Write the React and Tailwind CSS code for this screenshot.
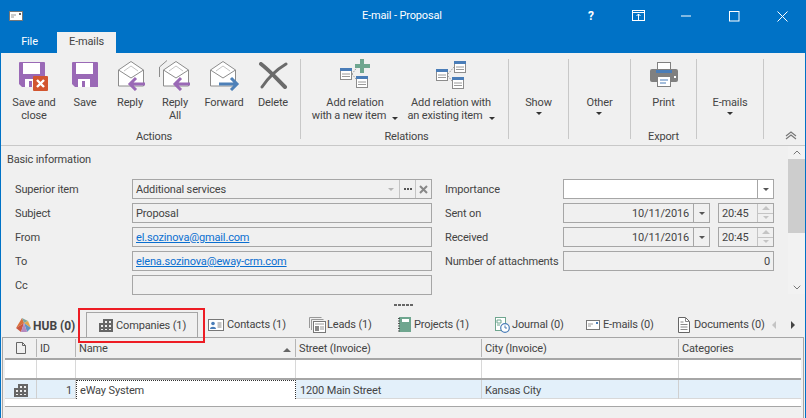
import { ChevronUp, ChevronDown } from 'lucide-react'

const FONT = { fontFamily: 'Roboto, "Noto Sans", sans-serif' }

// --- ribbon icons ---
function Disk() {
  return (
    <g>
      <path d="M1 0h24a1 1 0 0 1 1 1v24H3l-3-3V1a1 1 0 0 1 1-1z" fill="#9a69b6" />
      <rect x="4" y="1" width="17" height="11" fill="#fff" />
      <rect x="6" y="17" width="12" height="8" fill="#fff" />
      <rect x="10" y="19" width="3" height="6" fill="#9a69b6" />
    </g>
  )
}

function SaveCloseIcon() {
  return (
    <svg className="mt-[3px]" width="32" height="29" viewBox="0 0 32 29">
      <g transform="translate(1 0)"><Disk /></g>
      <rect x="15" y="14" width="15" height="15" rx="1" fill="#d2552f" />
      <path d="M19 18l7 7M26 18l-7 7" stroke="#fff" strokeWidth="2.4" />
    </svg>
  )
}

function SaveIcon() {
  return (
    <svg className="mt-[3px]" width="26" height="25" viewBox="0 0 26 25">
      <Disk />
    </svg>
  )
}

function Envelope({ back }) {
  return (
    <g fill="none" stroke="#8c8c8c" strokeWidth="1">
      {back && <path d="M-3.5 17V7L4 .5" />}
      <path d="M.5 10L13 1.5 25.5 10v16H.5z" fill="#fff" />
      <path d="M.5 10L13 18l12.5-8" />
      <path d="M6 11l7-5 7 5" stroke="#c4c4c4" />
    </g>
  )
}

function ReplyIcon({ all }) {
  return (
    <svg width="34" height="32" viewBox="-5 -1 34 32">
      <Envelope back={all} />
      <path d="M27 24H12M18 18l-6 6 6 6" fill="none" stroke="#9a69b6" strokeWidth="3" />
    </svg>
  )
}

function ForwardIcon() {
  return (
    <svg width="34" height="32" viewBox="-3 -1 34 32">
      <Envelope />
      <path d="M9 24h17M21 18l6 6-6 6" fill="none" stroke="#4d80b8" strokeWidth="3" />
    </svg>
  )
}

function DeleteIcon() {
  return (
    <svg className="mt-[3px]" width="30" height="27" viewBox="0 0 30 27">
      <path d="M3 2c8 6 16 15 24 23" fill="none" stroke="#6b6b6b" strokeWidth="4" strokeLinecap="round" />
      <path d="M28 2C18 8 10 16 4 25" fill="none" stroke="#6b6b6b" strokeWidth="3" strokeLinecap="round" />
    </svg>
  )
}

function MiniTable({ x, y }) {
  return (
    <g transform={`translate(${x} ${y})`}>
      <rect x=".5" y=".5" width="11" height="11" fill="#fff" stroke="#8c8c8c" />
      <rect x="0" y="0" width="12" height="3" fill="#4a7db8" />
      <path d="M2 6h8M2 8.500h8" stroke="#9a9a9a" />
    </g>
  )
}

function RelationNewIcon() {
  return (
    <svg width="32" height="32" viewBox="0 0 32 32">
      <MiniTable x="1" y="9" />
      <MiniTable x="17" y="17" />
      <path d="M13 15l6-8M13 15l4 5" stroke="#a0a0a0" strokeDasharray="1.500 1" fill="none" />
      <path d="M21 0h4v5h6v4h-6v5h-4V9h-5V5h5z" fill="#6fa68f" />
    </svg>
  )
}

function RelationExistIcon() {
  return (
    <svg width="32" height="32" viewBox="0 0 32 32">
      <MiniTable x="1" y="10" />
      <MiniTable x="19" y="2" />
      <MiniTable x="17" y="18" />
      <path d="M13 15l6-7M13 17l4 5" stroke="#a0a0a0" strokeDasharray="1.500 1" fill="none" />
    </svg>
  )
}

function PrintIcon() {
  return (
    <svg className="mt-[2px]" width="30" height="28" viewBox="0 0 30 28">
      <rect x="8.500" y="1.500" width="13" height="10" fill="#fff" stroke="#808080" />
      <rect x="1" y="8" width="28" height="13" rx="2" fill="#808080" />
      <rect x="7" y="9" width="16" height="3" fill="#4a7db8" />
      <rect x="8.500" y="15.500" width="13" height="10" fill="#fff" stroke="#808080" />
      <path d="M11 19h8M11 22h6" stroke="#4a7db8" />
      <rect x="25" y="15" width="2" height="2" fill="#fff" />
    </svg>
  )
}

function Caret({ color = 'border-t-[#333]' }) {
  return <span className={`inline-block w-0 h-0 border-x-[3px] border-x-transparent border-t-[3px] ${color}`} />
}

function RibbonButton({ width, icon, lines, caret }) {
  return (
    <div className="flex flex-col items-center h-full" style={{ width }}>
      <div className="h-[33px] flex items-start justify-center">{icon}</div>
      <div className="mt-[4px] text-center leading-[13px] whitespace-nowrap">
        {lines.map((l, i) => (
          <div key={l}>
            {l}
            {caret === 'inline' && i === lines.length - 1 && (
              <span className="inline-block ml-[6px] align-middle"><Caret /></span>
            )}
          </div>
        ))}
        {caret === 'below' && <div className="flex justify-center pt-[3px] leading-[6px]"><Caret /></div>}
      </div>
    </div>
  )
}

function RibbonGroup({ label, children, className = '' }) {
  return (
    <div className={`flex flex-col h-[80px] border-r border-[#c8c8c8] shrink-0 ${className}`}>
      <div className="flex flex-1 min-h-0">{children}</div>
      <div className="text-center leading-[14px] h-[14px] mb-[-5px] -mt-px">{label}</div>
    </div>
  )
}

// --- form ---
function Box({ className = '', children }) {
  return (
    <div className={`h-[20px] border border-[#a6a6a6] flex items-center leading-none ${className}`}>{children}</div>
  )
}

function DropBtn({ disabled }) {
  return (
    <div className="w-[16px] h-full border-l border-[#a6a6a6] flex items-center justify-center shrink-0">
      <Caret color={disabled ? 'border-t-[#b5b5b5]' : 'border-t-[#555]'} />
    </div>
  )
}

function DateRow({ label }) {
  return (
    <div className="flex items-center h-[20px]">
      <div className="w-[118px] shrink-0 pt-[2px]">{label}</div>
      <Box className="w-[147px] justify-end">
        <span className="pr-[4px] pt-px">10/11/2016</span>
        <DropBtn />
      </Box>
      <Box className="w-[56px] ml-[8px]">
        <span className="pl-[3px] pt-px flex-1">20:45</span>
        <div className="w-[16px] h-full border-l border-[#c4c4c4] flex flex-col shrink-0">
          <div className="flex-1 flex items-center justify-center border-b border-[#c4c4c4]">
            <span className="w-0 h-0 border-x-[4px] border-x-transparent border-b-[4px] border-b-[#c4c4c4]" />
          </div>
          <div className="flex-1 flex items-center justify-center">
            <Caret color="border-t-[#c4c4c4]" />
          </div>
        </div>
      </Box>
    </div>
  )
}

// --- tab icons ---
function BuildingIcon({ size = 14 }) {
  return (
    <svg className="shrink-0" width={size} height={size} viewBox="0 0 14 14">
      <path d="M0 5h4V1h10v13H0z" fill="#666" />
      <path d="M6 3h2v2H6zM10 3h2v2h-2zM2 7h2v2H2zM6 7h2v2H6zM10 7h2v2h-2zM2 11h2v1H2zM6 11h2v1H6zM10 11h2v1h-2z" fill="#eee" />
    </svg>
  )
}

function HubIcon() {
  return (
    <svg className="shrink-0" width="16" height="16" viewBox="0 0 16 16">
      <path d="M1 11L7 1l2 5z" fill="#d9703a" />
      <path d="M7 1l6 3-4 2z" fill="#7fa6a0" />
      <path d="M13 4l3 7-7-5z" fill="#e3a84e" />
      <path d="M1 11l8-5-3 9z" fill="#c9553f" />
      <path d="M9 6l7 5-4 4z" fill="#5f93c4" />
      <path d="M6 15l3-9 3 9z" fill="#b58ac0" />
    </svg>
  )
}

function ContactsIcon() {
  return (
    <svg className="shrink-0" width="16" height="12" viewBox="0 0 16 12">
      <rect x=".5" y=".5" width="15" height="11" fill="#fff" stroke="#777" />
      <circle cx="5" cy="4.500" r="1.800" fill="#4a7db8" />
      <path d="M2 10c0-3 6-3 6 0z" fill="#4a7db8" />
      <path d="M9.500 4h4M9.500 6h4M9.500 8h4" stroke="#888" />
    </svg>
  )
}

function LeadsIcon() {
  return (
    <svg className="shrink-0" width="17" height="16" viewBox="0 0 17 16">
      <path d="M.5 11V.5h12M2.500 13V2.500h12" fill="none" stroke="#999" />
      <rect x="4.500" y="4.500" width="12" height="11" fill="#fff" stroke="#777" />
      <rect x="6" y="9" width="4" height="5" fill="#888" />
      <path d="M6 7h9M11 10h4M11 12h4" stroke="#999" />
    </svg>
  )
}

function ProjectsIcon() {
  return (
    <svg className="shrink-0" width="16" height="15" viewBox="0 0 16 15">
      <rect x="2" y="0" width="12" height="15" fill="#6fa68f" />
      <path d="M1 1.500h2M1 4h2M1 6.500h2M1 9h2M1 11.500h2M1 14h2" stroke="#555" />
      <rect x="5" y="2" width="7" height="3" fill="#fff" />
    </svg>
  )
}

function JournalIcon() {
  return (
    <svg className="shrink-0" width="15" height="16" viewBox="0 0 15 16">
      <rect x=".5" y=".5" width="10" height="13" fill="#fff" stroke="#6fa68f" />
      <path d="M2 3h4v3H2zM2 8h3" stroke="#6fa68f" fill="none" />
      <circle cx="10" cy="11" r="4.300" fill="#fff" stroke="#4a7db8" strokeWidth="1.200" />
      <path d="M10 8.500V11h2" stroke="#4a7db8" fill="none" />
    </svg>
  )
}

function MailIcon() {
  return (
    <svg className="shrink-0" width="14" height="10" viewBox="0 0 14 10">
      <rect x=".5" y=".5" width="13" height="9" fill="#fff" stroke="#777" />
      <rect x="10" y="2" width="2" height="2" fill="#4a7db8" />
      <path d="M2 4h5M2 6h3" stroke="#999" />
    </svg>
  )
}

function DocIcon() {
  return (
    <svg className="shrink-0" width="12" height="16" viewBox="0 0 12 16">
      <path d="M.5.500h7l4 4v11H.5z" fill="#fff" stroke="#666" />
      <path d="M7.500.500v4h4M2.500 5h3M2.500 7.500h7M2.500 10h7M2.500 12.500h7" stroke="#888" fill="none" />
    </svg>
  )
}

const TABS = [
  { label: 'Contacts (1)', icon: <ContactsIcon />, width: 101, gap: 3 },
  { label: 'Leads (1)', icon: <LeadsIcon />, width: 88, gap: 1 },
  { label: 'Projects (1)', icon: <ProjectsIcon />, width: 98, gap: 1 },
  { label: 'Journal (0)', icon: <JournalIcon />, width: 91, gap: 2 },
  { label: 'E-mails (0)', icon: <MailIcon />, width: 92, gap: 3 },
  { label: 'Documents (0)', icon: <DocIcon />, width: 95, gap: 4 },
]

const COLS = 'grid grid-cols-[32px_39px_220px_186px_197px_123px]'

export default function App() {
  return (
    <div className="w-[806px] h-[418px] bg-[#0072c6] text-[#444] text-[11px] tracking-[-0.15px] flex flex-col overflow-hidden" style={FONT}>
      {/* title bar */}
      <div className="h-[32px] flex items-center text-white shrink-0">
        <div className="w-[402px] pl-[9px] flex items-center">
          <svg width="14" height="10" viewBox="0 0 14 10">
            <rect x=".5" y=".5" width="13" height="9" fill="#fff" stroke="#777" />
            <rect x="10" y="2" width="2" height="2" fill="#666" />
            <path d="M2 4h5M2 6h3" stroke="#999" />
          </svg>
        </div>
        <div className="w-[85px] -ml-[40px] whitespace-nowrap">E-mail - Proposal</div>
        <div className="ml-[137px] w-[14px] text-center font-bold text-[12px]">?</div>
        <svg className="ml-[34px]" width="14" height="12" viewBox="0 0 14 12" fill="none" stroke="#fff">
          <rect x=".5" y=".5" width="12" height="10" />
          <path d="M.5 2.500h12M6.500 10V4M4.500 6l2-2 2 2" />
        </svg>
        <svg className="ml-[35px]" width="11" height="2" viewBox="0 0 11 2"><path d="M0 1h10" stroke="#fff" /></svg>
        <svg className="ml-[37px]" width="11" height="11" viewBox="0 0 11 11"><rect x=".5" y=".5" width="9.500" height="9.500" fill="none" stroke="#fff" /></svg>
        <svg className="ml-[37px]" width="11" height="11" viewBox="0 0 11 11"><path d="M.5.500l10 10M10.500.500l-10 10" stroke="#fff" /></svg>
      </div>

      {/* ribbon tabs */}
      <div className="h-[21px] flex shrink-0 text-white">
        <div className="w-[57px] flex items-center justify-center pl-[2px]">File</div>
        <div className="w-[59px] bg-[#f0f0f0] text-[#444] flex items-center justify-center">E-mails</div>
      </div>

      {/* window body */}
      <div className="flex-1 min-h-0 ml-px mr-px bg-[#f0f0f0] flex flex-col">
        {/* ribbon */}
        <div className="h-[93px] border-b border-[#c8c8c8] pt-[6px] flex shrink-0">
          <RibbonGroup label="Actions" className="w-[300px] pl-[7px]">
            <RibbonButton width={52} icon={<SaveCloseIcon />} lines={['Save and', 'close']} />
            <RibbonButton width={50} icon={<SaveIcon />} lines={['Save']} />
            <RibbonButton width={40} icon={<ReplyIcon />} lines={['Reply']} />
            <RibbonButton width={50} icon={<ReplyIcon all />} lines={['Reply', 'All']} />
            <RibbonButton width={48} icon={<ForwardIcon />} lines={['Forward']} />
            <RibbonButton width={50} icon={<DeleteIcon />} lines={['Delete']} />
          </RibbonGroup>
          <RibbonGroup label="Relations" className="w-[208px] pl-[4px]">
            <RibbonButton width={100} icon={<RelationNewIcon />} lines={['Add relation', 'with a new item']} caret="inline" />
            <RibbonButton width={92} icon={<RelationExistIcon />} lines={['Add relation with', 'an existing item']} caret="inline" />
          </RibbonGroup>
          <RibbonGroup label="" className="w-[60px]">
            <RibbonButton width={59} icon={<span />} lines={['Show']} caret="below" />
          </RibbonGroup>
          <RibbonGroup label="" className="w-[62px]">
            <RibbonButton width={61} icon={<span />} lines={['Other']} caret="below" />
          </RibbonGroup>
          <RibbonGroup label="Export" className="w-[66px]">
            <RibbonButton width={65} icon={<PrintIcon />} lines={['Print']} />
          </RibbonGroup>
          <RibbonGroup label="" className="w-[67px]">
            <RibbonButton width={66} icon={<span />} lines={['E-mails']} caret="below" />
          </RibbonGroup>
          <div className="flex-1 flex items-end justify-center pb-[5px] pl-[12px]">
            <svg width="12" height="9" viewBox="0 0 12 9" fill="none" stroke="#777" strokeWidth="1.200">
              <path d="M1 5l5-4 5 4M1 8l5-4 5 4" />
            </svg>
          </div>
        </div>

        {/* form + scrollbar */}
        <div className="h-[151px] flex shrink-0">
          <div className="w-[787px] pl-[6px] pt-[6px]">
            <div className="leading-[16px] h-[16px]">Basic information</div>
            <div className="flex mt-[11px] pl-[8px]">
              <div className="w-[300px] grid grid-cols-[117px_300px] gap-y-[4px] items-center shrink-0">
                <div className="pt-[2px]">Superior item</div>
                <Box>
                  <span className="pl-[3px] pt-px flex-1">Additional services</span>
                  <div className="w-[16px] h-full flex items-center justify-center"><Caret color="border-t-[#b5b5b5]" /></div>
                  <div className="w-[16px] h-full border-l border-[#c4c4c4] flex items-center justify-center gap-px">
                    <span className="w-[2px] h-[2px] bg-[#555]" />
                    <span className="w-[2px] h-[2px] bg-[#555]" />
                    <span className="w-[2px] h-[2px] bg-[#555]" />
                  </div>
                  <div className="w-[16px] h-full border-l border-[#c4c4c4] flex items-center justify-center">
                    <svg width="9" height="9" viewBox="0 0 9 9"><path d="M1 1l7 7M8 1L1 8" stroke="#888" strokeWidth="2" /></svg>
                  </div>
                </Box>
                <div className="pt-[2px]">Subject</div>
                <Box><span className="pl-[3px] pt-px">Proposal</span></Box>
                <div className="pt-[2px]">From</div>
                <Box><span className="pl-[3px] pt-px text-[#0a6fd0] underline">el.sozinova@gmail.com</span></Box>
                <div className="pt-[2px]">To</div>
                <Box><span className="pl-[3px] pt-px text-[#0a6fd0] underline">elena.sozinova@eway-crm.com</span></Box>
                <div className="pt-[2px]">Cc</div>
                <Box />
              </div>
              <div className="ml-[130px] flex flex-col gap-[4px] w-[329px]">
                <div className="flex items-center h-[20px]">
                  <div className="w-[118px] shrink-0 pt-[2px]">Importance</div>
                  <Box className="w-[211px] bg-white justify-end"><DropBtn /></Box>
                </div>
                <DateRow label="Sent on" />
                <DateRow label="Received" />
                <div className="flex items-center h-[20px]">
                  <div className="w-[118px] shrink-0 pt-[2px] whitespace-nowrap">Number of attachments</div>
                  <Box className="w-[211px] justify-end"><span className="pr-[3px] pt-px">0</span></Box>
                </div>
              </div>
            </div>
          </div>
          {/* scrollbar */}
          <div className="flex-1 h-[148px] bg-[#f2f2f2] flex flex-col items-center">
            <ChevronUp size={12} strokeWidth={2} className="text-[#777] h-[13px]" />
            <div className="w-full h-[74px] bg-[#cdcdcd]" />
            <div className="flex-1" />
            <ChevronDown size={12} strokeWidth={2} className="text-[#777] h-[13px]" />
          </div>
        </div>

        {/* splitter dots */}
        <div className="h-[15px] flex justify-center gap-px pt-[7px] shrink-0">
          {[0, 1, 2, 3, 4].map((d) => (
            <span key={d} className="w-[3px] h-[2px] bg-[#666]" />
          ))}
        </div>

        {/* related-item tabs */}
        <div className="h-[25px] flex items-end shrink-0 pl-[14px] relative">
          <div className="w-[71px] h-full flex items-center gap-[2px] font-bold whitespace-nowrap text-[12px] tracking-normal">
            <HubIcon />
            <span className="pt-[2px]">HUB (0)</span>
          </div>
          <div className="w-[112px] h-full border-x border-t border-[#a6a6a6] flex items-center pl-[12px] gap-[3px] whitespace-nowrap">
            <BuildingIcon />
            <span className="pt-[2px]">Companies (1)</span>
          </div>
          {TABS.map((t) => (
            <div key={t.label} className="h-full flex items-center whitespace-nowrap shrink-0 pl-[10px]" style={{ width: t.width, gap: t.gap }}>
              {t.icon}
              <span className="pt-[2px]">{t.label}</span>
            </div>
          ))}
          <div className="h-full flex items-center">
            <span className="w-0 h-0 border-y-[4px] border-y-transparent border-r-[4px] border-r-[#c4c4c4] ml-[9px]" />
            <span className="w-0 h-0 border-y-[4px] border-y-transparent border-l-[4px] border-l-[#444] ml-[15px]" />
          </div>
          {/* red annotation around the tab */}
          <div className="absolute left-[77px] top-[-4px] w-[127px] h-[35px] border-[2px] border-[#ed1c24] pointer-events-none" />
        </div>

        {/* grid */}
        <div className="flex-1 min-h-0 border-t border-x border-[#a6a6a6] ml-px mr-px pl-[2px] pr-[2px] flex flex-col">
          <div className={`${COLS} h-[22px] border-b-2 border-[#a6a6a6] items-center`}>
            <div className="h-[18px] flex items-center justify-center border-r border-[#b5b5b5]">
              <svg width="10" height="12" viewBox="0 0 10 12" fill="none" stroke="#666">
                <path d="M.5.500h6l3 3v8h-9zM6.500.500v3h3" />
              </svg>
            </div>
            <div className="h-[18px] flex items-center pl-[3px] pt-[3px] border-r border-[#b5b5b5]">ID</div>
            <div className="h-[18px] flex items-center justify-between pl-[3px] pr-[4px] pt-[3px] border-r border-[#b5b5b5]">
              Name
              <span className="w-0 h-0 border-x-[4px] border-x-transparent border-b-[4px] border-b-[#666]" />
            </div>
            <div className="h-[18px] flex items-center pl-[3px] pt-[3px] border-r border-[#b5b5b5]">Street (Invoice)</div>
            <div className="h-[18px] flex items-center pl-[3px] pt-[3px] border-r border-[#b5b5b5]">City (Invoice)</div>
            <div className="h-[18px] flex items-center pl-[3px] pt-[3px]">Categories</div>
          </div>
          <div className={`${COLS} h-[18px] bg-white`}>
            <div className="border-r border-[#d8d8d8]" />
            <div className="border-r border-[#d8d8d8]" />
            <div className="border-r border-[#d8d8d8]" />
            <div className="border-r border-[#d8d8d8]" />
            <div className="border-r border-[#d8d8d8]" />
            <div />
          </div>
          <div className={`${COLS} h-[21px] bg-[#e3f0fa] border-t-2 border-b border-t-[#a6a6a6] border-b-[#d8d8d8]`}>
            <div className="flex items-center justify-center border-r border-[#d0d0d0]"><BuildingIcon /></div>
            <div className="flex items-center justify-end pr-[3px] pt-[2px] border-r border-[#d0d0d0]">1</div>
            <div className="flex items-center pl-[3px] pt-[2px] bg-white border border-dotted border-[#333]">eWay System</div>
            <div className="flex items-center pl-[4px] pt-[2px] border-r border-[#d0d0d0]">1200 Main Street</div>
            <div className="flex items-center pl-[3px] pt-[2px] border-r border-[#d0d0d0]">Kansas City</div>
            <div />
          </div>
          <div className="h-[8px] bg-white border-b border-[#a6a6a6]" />
        </div>
      </div>
    </div>
  )
}
